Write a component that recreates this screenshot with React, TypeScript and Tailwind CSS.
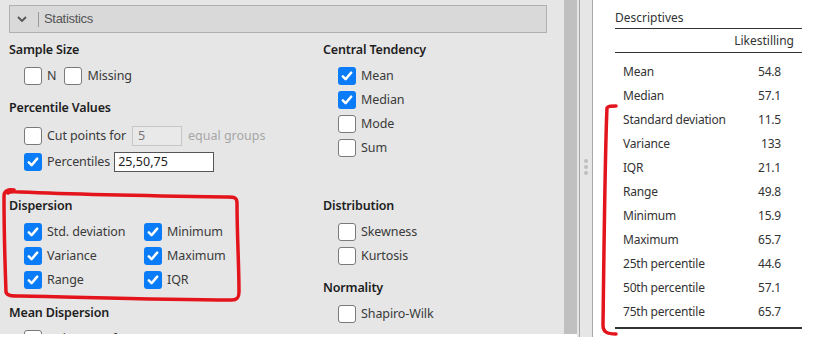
import React from "react";

const font = { fontFamily: '"Noto Sans", "Open Sans", sans-serif' };

function Box({ checked }: { checked?: boolean }) {
  if (checked)
    return (
      <span className="w-[18px] h-[18px] rounded-[3px] bg-[#0a7cf8] flex items-center justify-center shrink-0">
        <svg width="12" height="12" viewBox="0 0 12 12">
          <path d="M1.8 6.4 L4.6 9.2 L10.2 2.6" fill="none" stroke="white" strokeWidth="2.5" strokeLinecap="round" strokeLinejoin="round" />
        </svg>
      </span>
    );
  return <span className="w-[18px] h-[18px] rounded-[3px] bg-white border border-[#7a7a7a] shrink-0" />;
}

function Check({ label, checked, className = "" }: { label: string; checked?: boolean; className?: string }) {
  return (
    <div className={`flex items-center gap-[5px] h-6 ${className}`}>
      <Box checked={checked} />
      <span className="text-[12.5px] text-[#3a3a3a] tracking-[-0.1px]">{label}</span>
    </div>
  );
}

function Heading({ children, className = "" }: { children: React.ReactNode; className?: string }) {
  return <div className={`h-5 leading-5 text-[12.5px] font-semibold text-[#1e1e1e] tracking-[-0.15px] ${className}`}>{children}</div>;
}

const rows: [string, string][] = [
  ["Mean", "54.8"],
  ["Median", "57.1"],
  ["Standard deviation", "11.5"],
  ["Variance", "133"],
  ["IQR", "21.1"],
  ["Range", "49.8"],
  ["Minimum", "15.9"],
  ["Maximum", "65.7"],
  ["25th percentile", "44.6"],
  ["50th percentile", "57.1"],
  ["75th percentile", "65.7"],
];

export default function App() {
  return (
    <div className="relative w-[813px] h-[337px] bg-white flex overflow-hidden" style={font}>
      {/* options panel */}
      <div className="w-[564px] h-[334px] bg-[#e6e6e6] overflow-hidden pt-[5px] pl-[9px] pr-[17px]">
        <div className="h-[28px] bg-[#d9d9d9] border border-[#b0b0b0] flex items-center">
          <svg width="10" height="6" viewBox="0 0 10 6" className="ml-[7px]">
            <path d="M1 1 L5 5 L9 1" fill="none" stroke="#555" strokeWidth="1.8" />
          </svg>
          <span className="ml-[11px] w-px h-[15px] bg-[#9a9a9a]" />
          <span className="ml-[5px] text-[13px] text-[#555] tracking-[-0.3px]" style={{ fontFamily: '"Liberation Sans", Arial, sans-serif' }}>
            Statistics
          </span>
        </div>
        <div className="grid grid-cols-[314px_1fr] mt-[7px]">
          <div>
            <Heading>Sample Size</Heading>
            <div className="flex pl-[15px] mt-[4px] gap-[8px]">
              <Check label="N" />
              <Check label="Missing" />
            </div>
            <Heading className="mt-[10px]">Percentile Values</Heading>
            <div className="pl-[15px] mt-[5px]">
              <div className="flex items-center h-[26px]">
                <Box />
                <span className="ml-[5px] text-[12.5px] text-[#3a3a3a] tracking-[-0.1px]">Cut points for</span>
                <span className="ml-[6px] w-[50px] h-[20px] border border-[#c6c6c6] bg-[#e9e9e9] text-[12.5px] text-[#777] leading-[18px] px-[5px]">5</span>
                <span className="ml-[6px] text-[12.5px] text-[#a6a6a6]">equal groups</span>
              </div>
              <div className="flex items-center h-[26px]">
                <Box checked />
                <span className="ml-[5px] text-[12.5px] text-[#3a3a3a] tracking-[-0.1px]">Percentiles</span>
                <span className="ml-[4px] w-[100px] h-[20px] border border-[#555] bg-white text-[12.5px] text-[#222] leading-[18px] px-[3px]">25,50,75</span>
              </div>
            </div>
            <Heading className="mt-[21px]">Dispersion</Heading>
            <div className="grid grid-cols-[120px_1fr] pl-[15px] mt-[4px]">
              <Check label="Std. deviation" checked />
              <Check label="Minimum" checked />
              <Check label="Variance" checked />
              <Check label="Maximum" checked />
              <Check label="Range" checked />
              <Check label="IQR" checked />
            </div>
            <Heading className="mt-[11px]">Mean Dispersion</Heading>
            <div className="pl-[15px] mt-1">
              <Check label="Std. error of Mean" />
            </div>
          </div>
          <div>
            <Heading>Central Tendency</Heading>
            <div className="pl-[15px] mt-[4px]">
              <Check label="Mean" checked />
              <Check label="Median" checked />
              <Check label="Mode" />
              <Check label="Sum" />
            </div>
            <Heading className="mt-[36px]">Distribution</Heading>
            <div className="pl-[15px] mt-[4px]">
              <Check label="Skewness" />
              <Check label="Kurtosis" />
            </div>
            <Heading className="mt-[10px]">Normality</Heading>
            <div className="pl-[15px] mt-[4px]">
              <Check label="Shapiro-Wilk" />
            </div>
          </div>
        </div>
      </div>

      {/* scrollbar */}
      <div className="w-[13px] h-[334px] bg-[#c0c0c0]" />

      {/* splitter */}
      <div className="w-[16px] h-full bg-[#e6e6e6] flex">
        <div className="w-[2px]" />
        <div className="w-px bg-[#a8a8a8]" />
        <div className="flex-1 flex flex-col items-center justify-center gap-[2px] pb-[4px]">
          <span className="w-[4px] h-[4px] rounded-full bg-[#bfbfbf]" />
          <span className="w-[4px] h-[4px] rounded-full bg-[#bfbfbf]" />
          <span className="w-[4px] h-[4px] rounded-full bg-[#bfbfbf]" />
        </div>
        <div className="w-px bg-[#a8a8a8]" />
      </div>

      {/* results */}
      <div className="flex-1 bg-white pl-[22px] pt-[7px] text-[#333]">
        <div className="w-[187px]">
          <div className="h-[22px] text-[12px] leading-[21px] border-b border-[#333]">Descriptives</div>
          <div className="h-[24px] leading-[24px] text-[12px] text-right pr-[8px] border-b border-[#333]">Likestilling</div>
          <div className="pt-[7px] pb-[3px] border-b-2 border-[#333]">
            {rows.map(([k, v]) => (
              <div key={k} className="flex justify-between h-[24px] leading-[24px] text-[12px] tracking-[-0.2px] pl-[8px] pr-[21px]">
                <span>{k}</span>
                <span>{v}</span>
              </div>
            ))}
          </div>
        </div>
      </div>

      {/* red annotations */}
      <svg className="absolute left-0 top-0 pointer-events-none" width="813" height="337">
        <path
          d="M14 190 C8 189 4 191 4 196 C4 230 5 265 6 292 C7 296 12 296 20 296 C80 297 150 300 232 300 C238 300 239 297 239 292 C239 265 237 235 237 203 C237 198 235 197 228 197 C160 196 90 195 20 192 C14 192 10 191 8 193"
          fill="none"
          stroke="#e3141c"
          strokeWidth="3.5"
          strokeLinecap="round"
        />
        <path
          d="M616 106 C611 106 608 106 607 108 C605 150 604 250 603 325 C603 332 607 334 616 334"
          fill="none"
          stroke="#e3141c"
          strokeWidth="3.5"
          strokeLinecap="round"
        />
      </svg>
    </div>
  );
}
